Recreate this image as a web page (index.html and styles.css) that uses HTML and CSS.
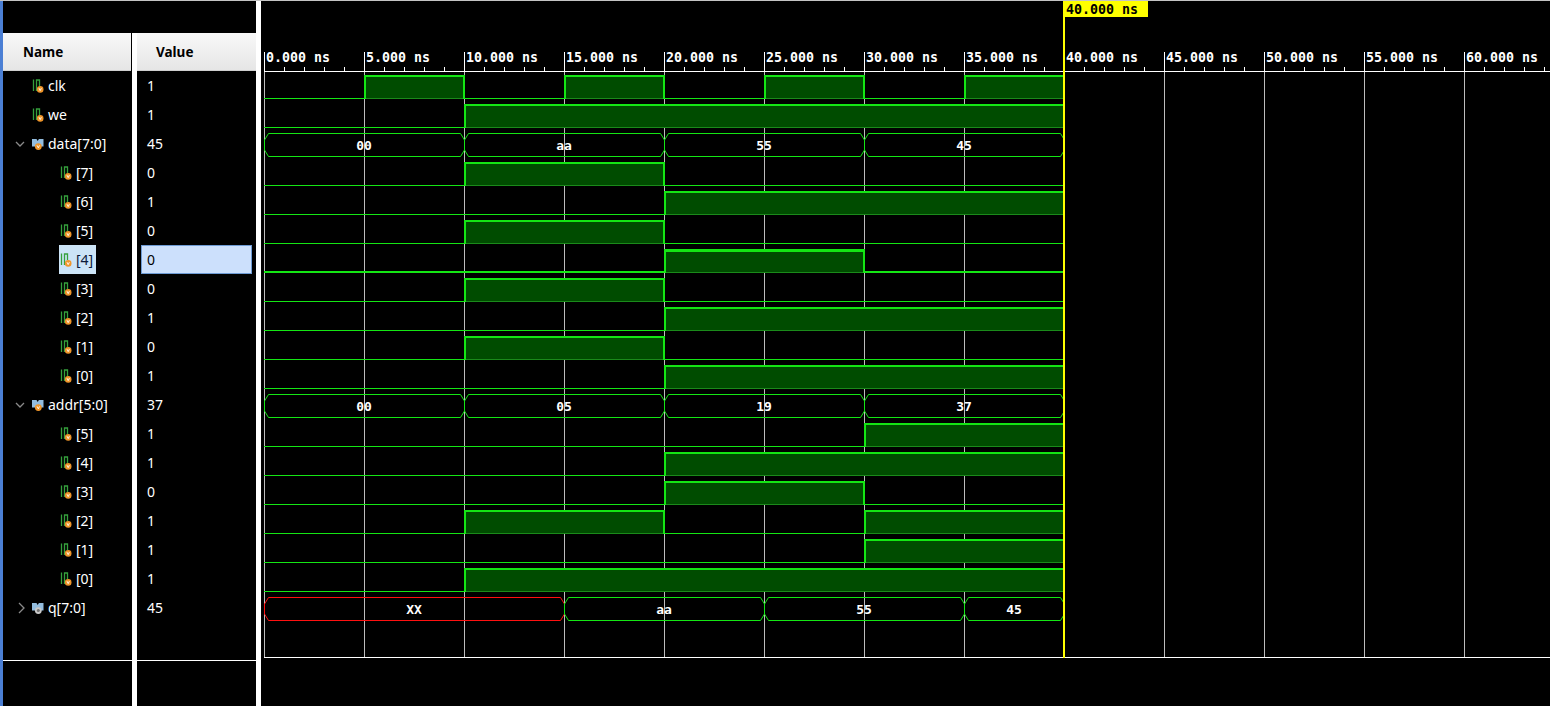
FILE: index.html
```html
<!DOCTYPE html>
<html lang="en">

<head>
    <meta charset="UTF-8">
    <title>Waveform</title>
    <link rel="stylesheet" href="styles.css">
</head>

<body>
    <svg class="defs" width="0" height="0">
        <symbol id="i-bit" viewBox="0 0 12 14">
            <path d="M1.5 0.5 V12 M4.5 12 V1 H7.5 V7" fill="none" stroke="#35a03c" stroke-width="1.3" />
            <circle cx="8.2" cy="10.4" r="3.3" fill="#f0962a" />
            <path d="M7 9.2 L8.2 11.6 L9.4 9.2" fill="none" stroke="#fff" stroke-width="0.9" />
        </symbol>
        <symbol id="i-bus" viewBox="0 0 12 14">
            <path d="M0 2 H4.5 L5.7 4 L6.9 2 H11.5 V9.5 H0 Z" fill="#93bddf" />
            <circle cx="6.3" cy="9.6" r="3.4" fill="#f0962a" />
            <path d="M5.1 8.4 L6.3 10.8 L7.5 8.4" fill="none" stroke="#fff" stroke-width="0.9" />
        </symbol>
        <symbol id="i-out" viewBox="0 0 12 14">
            <path d="M0 2 H4.5 L5.7 4 L6.9 2 H11.5 V9.5 H0 Z" fill="#93bddf" />
            <circle cx="6.3" cy="9.6" r="3.4" fill="#c9c9c9" />
            <circle cx="6.3" cy="9.6" r="1.5" fill="#6f6f6f" />
        </symbol>
        <symbol id="i-down" viewBox="0 0 10 10">
            <path d="M1 3 L5 7 L9 3" fill="none" stroke="#8a8a8a" stroke-width="1.3" />
        </symbol>
        <symbol id="i-right" viewBox="0 0 10 12">
            <path d="M3 1 L8 6 L3 11" fill="none" stroke="#8a8a8a" stroke-width="1.3" />
        </symbol>
    </svg>

    <div class="app">
        <div class="strip"></div>

        <div class="col names">
            <div class="head">Name</div>
            <div class="row"><span class="chev"></span><span class="item"><svg class="ic"><use href="#i-bit" /></svg><span>clk</span></span></div>
            <div class="row"><span class="chev"></span><span class="item"><svg class="ic"><use href="#i-bit" /></svg><span>we</span></span></div>
            <div class="row"><span class="chev"><svg class="cv"><use href="#i-down" /></svg></span><span class="item"><svg class="ic"><use href="#i-bus" /></svg><span>data[7:0]</span></span></div>
            <div class="row sub"><span class="chev"></span><span class="item"><svg class="ic"><use href="#i-bit" /></svg><span>[7]</span></span></div>
            <div class="row sub"><span class="chev"></span><span class="item"><svg class="ic"><use href="#i-bit" /></svg><span>[6]</span></span></div>
            <div class="row sub"><span class="chev"></span><span class="item"><svg class="ic"><use href="#i-bit" /></svg><span>[5]</span></span></div>
            <div class="row sub"><span class="chev"></span><span class="item selected"><svg class="ic"><use href="#i-bit" /></svg><span>[4]</span></span></div>
            <div class="row sub"><span class="chev"></span><span class="item"><svg class="ic"><use href="#i-bit" /></svg><span>[3]</span></span></div>
            <div class="row sub"><span class="chev"></span><span class="item"><svg class="ic"><use href="#i-bit" /></svg><span>[2]</span></span></div>
            <div class="row sub"><span class="chev"></span><span class="item"><svg class="ic"><use href="#i-bit" /></svg><span>[1]</span></span></div>
            <div class="row sub"><span class="chev"></span><span class="item"><svg class="ic"><use href="#i-bit" /></svg><span>[0]</span></span></div>
            <div class="row"><span class="chev"><svg class="cv"><use href="#i-down" /></svg></span><span class="item"><svg class="ic"><use href="#i-bus" /></svg><span>addr[5:0]</span></span></div>
            <div class="row sub"><span class="chev"></span><span class="item"><svg class="ic"><use href="#i-bit" /></svg><span>[5]</span></span></div>
            <div class="row sub"><span class="chev"></span><span class="item"><svg class="ic"><use href="#i-bit" /></svg><span>[4]</span></span></div>
            <div class="row sub"><span class="chev"></span><span class="item"><svg class="ic"><use href="#i-bit" /></svg><span>[3]</span></span></div>
            <div class="row sub"><span class="chev"></span><span class="item"><svg class="ic"><use href="#i-bit" /></svg><span>[2]</span></span></div>
            <div class="row sub"><span class="chev"></span><span class="item"><svg class="ic"><use href="#i-bit" /></svg><span>[1]</span></span></div>
            <div class="row sub"><span class="chev"></span><span class="item"><svg class="ic"><use href="#i-bit" /></svg><span>[0]</span></span></div>
            <div class="row"><span class="chev"><svg class="cv right"><use href="#i-right" /></svg></span><span class="item"><svg class="ic"><use href="#i-out" /></svg><span>q[7:0]</span></span></div>
            <div class="foot"></div>
        </div>

        <div class="sep inner"></div>

        <div class="col values">
            <div class="head">Value</div>
            <div class="vrow"><span class="val">1</span></div>
            <div class="vrow"><span class="val">1</span></div>
            <div class="vrow"><span class="val">45</span></div>
            <div class="vrow"><span class="val">0</span></div>
            <div class="vrow"><span class="val">1</span></div>
            <div class="vrow"><span class="val">0</span></div>
            <div class="vrow"><span class="val selected">0</span></div>
            <div class="vrow"><span class="val">0</span></div>
            <div class="vrow"><span class="val">1</span></div>
            <div class="vrow"><span class="val">0</span></div>
            <div class="vrow"><span class="val">1</span></div>
            <div class="vrow"><span class="val">37</span></div>
            <div class="vrow"><span class="val">1</span></div>
            <div class="vrow"><span class="val">1</span></div>
            <div class="vrow"><span class="val">0</span></div>
            <div class="vrow"><span class="val">1</span></div>
            <div class="vrow"><span class="val">1</span></div>
            <div class="vrow"><span class="val">1</span></div>
            <div class="vrow"><span class="val">45</span></div>
            <div class="foot"></div>
        </div>

        <div class="sep"></div>

        <div class="wave" id="wave"></div>
    </div>

    <script>
        // 5 ns per 100px, time 0 at x = 264 (page coords)
        const X0 = 264, PX = 20, END = 40;
        const GREEN = '#14e614';
        const tx = t => X0 + t * PX;

        const data = ['00', 'aa', '55', '45'];
        const addr = ['00', '05', '19', '37'];

        function busSegs(vals) {
            return vals.map((v, k) => ({ a: k * 10, b: k * 10 + 10, v }));
        }

        function bitHighs(vals, bit) {
            const out = [];
            vals.forEach((v, k) => {
                if ((parseInt(v, 16) >> bit) & 1) {
                    const last = out[out.length - 1];
                    if (last && last[1] === k * 10) last[1] = k * 10 + 10;
                    else out.push([k * 10, k * 10 + 10]);
                }
            });
            return out;
        }

        const rows = [];
        rows.push({ bits: [[5, 10], [15, 20], [25, 30], [35, 40]] });
        rows.push({ bits: [[10, 40]] });
        rows.push({ bus: busSegs(data) });
        for (let b = 7; b >= 0; b--) rows.push({ bits: bitHighs(data, b) });
        rows.push({ bus: busSegs(addr) });
        for (let b = 5; b >= 0; b--) rows.push({ bits: bitHighs(addr, b) });
        rows.push({ bus: [{ a: 0, b: 15, v: 'XX', bad: true }, { a: 15, b: 25, v: 'aa' }, { a: 25, b: 35, v: '55' }, { a: 35, b: 40, v: '45' }] });
        const SEL = 6;

        const rect = (x, y, w, h, c) => `<rect x="${x}" y="${y}" width="${w}" height="${h}" fill="${c}"/>`;
        let s = '';

        // grid
        for (let k = 0; k <= 12; k++) s += rect(X0 + 100 * k, 72, 1, 585, '#bdbdbd');

        // ruler
        s += rect(X0, 71, 1286, 1, '#fff');
        for (let j = 0; j <= 64; j++) {
            const x = X0 + 20 * j;
            if (j % 5 === 0) {
                s += rect(x, 52, 1, 19, '#fff');
                s += `<text class="tick" x="${x + 2}" y="62">${(j / 5 * 5).toFixed(3)} ns</text>`;
            } else {
                s += rect(x, 67, 1, 4, '#fff');
            }
        }

        rows.forEach((r, i) => {
            const T = 71 + 29 * i;
            const th = i === SEL ? 1 : 0;
            if (r.bits) {
                s += rect(X0, T + 27 - th, tx(END) - X0, 1 + th, GREEN);
                r.bits.forEach(([a, b]) => {
                    const x0 = tx(a), x1 = tx(b);
                    s += rect(x0, T + 5, x1 - x0, 23, '#004c00');
                    s += rect(x0, T + 27, x1 - x0, 1, '#1a8a1a');
                    s += rect(x0, T + 4, x1 - x0, 2 + th, GREEN);
                    s += rect(x0, T + 4, 2, 24, GREEN);
                    if (b < END) s += rect(x1 - 1, T + 4, 2, 24, GREEN);
                });
            } else {
                r.bus.forEach(seg => {
                    const x0 = tx(seg.a) + 0.5, x1 = tx(seg.b) + 0.5;
                    const c = seg.bad ? '#ff1010' : GREEN;
                    const pts = [
                        [x0 + 4, T + 4.5], [x1 - 4, T + 4.5], [x1, T + 11], [x1, T + 21],
                        [x1 - 4, T + 27.5], [x0 + 4, T + 27.5], [x0, T + 21], [x0, T + 11]
                    ].map(p => p.join(',')).join(' ');
                    s += `<polygon points="${pts}" fill="none" stroke="${c}" stroke-width="1"/>`;
                    s += `<text class="busv" x="${(tx(seg.a) + tx(seg.b)) / 2}" y="${T + 20.5}">${seg.v}</text>`;
                });
            }
        });

        // frame bottom and cursor
        s += rect(X0, 657, 1286, 1, '#fff');
        s += rect(1063, 1, 2, 657, '#ffff00');
        s += rect(1063, 1, 85, 16, '#ffff00');
        s += `<text class="cursor" x="1066" y="13.5">40.000 ns</text>`;

        document.getElementById('wave').innerHTML =
            `<svg width="1289" height="705" viewBox="261 1 1289 705">${s}</svg>`;
    </script>
</body>

</html>
```

FILE: styles.css
```css
body {
    margin: 0;
    background: #000;
    font-family: "Noto Sans", Arial, sans-serif;
    font-size: 14px;
    overflow: hidden;
}

.defs {
    position: absolute;
}

.app {
    display: flex;
    height: 706px;
    box-sizing: border-box;
    border-top: 1px solid #c4c4c4;
}

.strip {
    width: 3px;
    background: #4b7fd4;
}

.col {
    color: #fff;
}

.names {
    width: 129px;
}

.values {
    width: 119px;
}

.sep {
    width: 5px;
    background: #fff;
}

.sep.inner {
    margin-top: 32px;
}

.wave {
    flex: 1;
    overflow: hidden;
}

.head {
    margin-top: 32px;
    height: 38px;
    line-height: 38px;
    box-sizing: border-box;
    background: linear-gradient(#f8f8f8, #e6e6e6);
    border-bottom: 1px solid #cfcfcf;
    color: #000;
    font-weight: bold;
    font-size: 13.5px;
}

.names .head {
    padding-left: 20px;
    margin-right: 1px;
}

.values .head {
    padding-left: 19px;
}

.row {
    display: flex;
    align-items: center;
    height: 29px;
    padding-left: 9px;
}

.row.sub {
    padding-left: 37px;
}

.chev {
    width: 19px;
    display: flex;
    align-items: center;
}

.cv {
    width: 10px;
    height: 10px;
    margin-left: 3px;
}

.cv.right {
    height: 12px;
    margin-left: 4px;
}

.item {
    display: flex;
    align-items: center;
    gap: 4px;
    height: 29px;
    padding: 0 3px 0 1px;
}

.item.selected {
    background: #cce4f7;
    color: #0b1a3a;
}

.ic {
    width: 12px;
    height: 14px;
}

.vrow {
    height: 29px;
    display: flex;
}

.val {
    width: 111px;
    margin-left: 4px;
    padding-left: 5px;
    box-sizing: border-box;
    border: 1px solid transparent;
    line-height: 27px;
}

.val.selected {
    background: #cce0fc;
    border-color: #6e9bd4;
    color: #000;
}

.foot {
    margin-top: 38px;
    border-top: 1px solid #fff;
}

.tick,
.busv,
.cursor {
    font-family: "DejaVu Sans Mono", "Liberation Mono", monospace;
    font-weight: bold;
}

.tick {
    fill: #fff;
    font-size: 13.3px;
}

.busv {
    fill: #fff;
    font-size: 13px;
    text-anchor: middle;
}

.cursor {
    fill: #000;
    font-size: 13.3px;
}
```
